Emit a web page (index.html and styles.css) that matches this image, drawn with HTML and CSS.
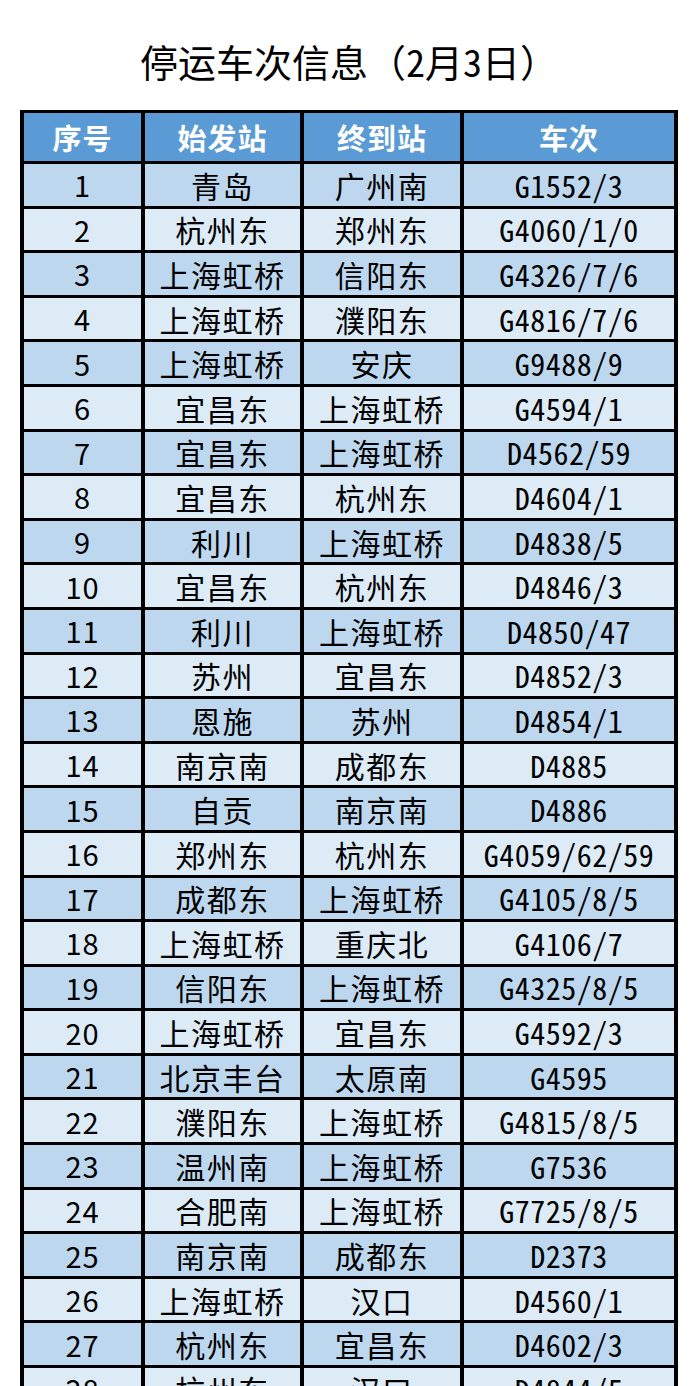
FILE: index.html
```html
<!DOCTYPE html>
<html lang="zh-CN">
<head>
<meta charset="utf-8">
<title>停运车次信息</title>
<link rel="stylesheet" href="styles.css">
</head>
<body>
<div class="page">
  <h1 class="title">停运车次信息（<span class="hw">2</span>月<span class="hw">3</span>日）</h1>
  <div class="table">
    <div class="row head"><div>序号</div><div>始发站</div><div>终到站</div><div>车次</div></div>
    <div class="row odd"><div>1</div><div>青岛</div><div>广州南</div><div>G1552/3</div></div>
    <div class="row even"><div>2</div><div>杭州东</div><div>郑州东</div><div>G4060/1/0</div></div>
    <div class="row odd"><div>3</div><div>上海虹桥</div><div>信阳东</div><div>G4326/7/6</div></div>
    <div class="row even"><div>4</div><div>上海虹桥</div><div>濮阳东</div><div>G4816/7/6</div></div>
    <div class="row odd"><div>5</div><div>上海虹桥</div><div>安庆</div><div>G9488/9</div></div>
    <div class="row even"><div>6</div><div>宜昌东</div><div>上海虹桥</div><div>G4594/1</div></div>
    <div class="row odd"><div>7</div><div>宜昌东</div><div>上海虹桥</div><div>D4562/59</div></div>
    <div class="row even"><div>8</div><div>宜昌东</div><div>杭州东</div><div>D4604/1</div></div>
    <div class="row odd"><div>9</div><div>利川</div><div>上海虹桥</div><div>D4838/5</div></div>
    <div class="row even"><div>10</div><div>宜昌东</div><div>杭州东</div><div>D4846/3</div></div>
    <div class="row odd"><div>11</div><div>利川</div><div>上海虹桥</div><div>D4850/47</div></div>
    <div class="row even"><div>12</div><div>苏州</div><div>宜昌东</div><div>D4852/3</div></div>
    <div class="row odd"><div>13</div><div>恩施</div><div>苏州</div><div>D4854/1</div></div>
    <div class="row even"><div>14</div><div>南京南</div><div>成都东</div><div>D4885</div></div>
    <div class="row odd"><div>15</div><div>自贡</div><div>南京南</div><div>D4886</div></div>
    <div class="row even"><div>16</div><div>郑州东</div><div>杭州东</div><div>G4059/62/59</div></div>
    <div class="row odd"><div>17</div><div>成都东</div><div>上海虹桥</div><div>G4105/8/5</div></div>
    <div class="row even"><div>18</div><div>上海虹桥</div><div>重庆北</div><div>G4106/7</div></div>
    <div class="row odd"><div>19</div><div>信阳东</div><div>上海虹桥</div><div>G4325/8/5</div></div>
    <div class="row even"><div>20</div><div>上海虹桥</div><div>宜昌东</div><div>G4592/3</div></div>
    <div class="row odd"><div>21</div><div>北京丰台</div><div>太原南</div><div>G4595</div></div>
    <div class="row even"><div>22</div><div>濮阳东</div><div>上海虹桥</div><div>G4815/8/5</div></div>
    <div class="row odd"><div>23</div><div>温州南</div><div>上海虹桥</div><div>G7536</div></div>
    <div class="row even"><div>24</div><div>合肥南</div><div>上海虹桥</div><div>G7725/8/5</div></div>
    <div class="row odd"><div>25</div><div>南京南</div><div>成都东</div><div>D2373</div></div>
    <div class="row even"><div>26</div><div>上海虹桥</div><div>汉口</div><div>D4560/1</div></div>
    <div class="row odd"><div>27</div><div>杭州东</div><div>宜昌东</div><div>D4602/3</div></div>
    <div class="row even"><div>28</div><div>杭州东</div><div>汉口</div><div>D4844/5</div></div>
  </div>
</div>
</body>
</html>
```
FILE: styles.css
```css
html, body {
  margin: 0;
  padding: 0;
  background: #ffffff;
}
body {
  font-family: "Noto Sans CJK SC", "Noto Sans", sans-serif;
  color: #000000;
}
.page {
  padding: 0 20px 40px;
}
.title {
  margin: 37px 0 25px;
  font-size: 38px;
  line-height: 48px;
  font-weight: 400;
  text-align: center;
}
.hw {
  font-feature-settings: "hwid" 1;
}
.table {
  width: 658px;
  box-sizing: border-box;
  background: #000000;
  padding: 3px 4px;
  display: flex;
  flex-direction: column;
  gap: 3px;
}
.row {
  display: grid;
  grid-template-columns: 117px 155px 156px 210px;
  column-gap: 4px;
  height: 41.6px;
}
.row > div {
  display: flex;
  align-items: center;
  justify-content: center;
  font-size: 30px;
  line-height: 1;
  letter-spacing: 1.5px;
  white-space: nowrap;
}
.row > div:first-child {
  font-size: 29px;
  letter-spacing: 1px;
}
.row > div:last-child {
  font-feature-settings: "hwid" 1;
  letter-spacing: 0.5px;
}
.row.head {
  height: 48px;
}
.row.head > div {
  background: #5b9bd5;
  color: #ffffff;
  font-weight: 700;
  font-size: 29px;
  letter-spacing: 1px;
}
.row.odd > div {
  background: #bdd7ee;
}
.row.even > div {
  background: #ddebf7;
}
```
